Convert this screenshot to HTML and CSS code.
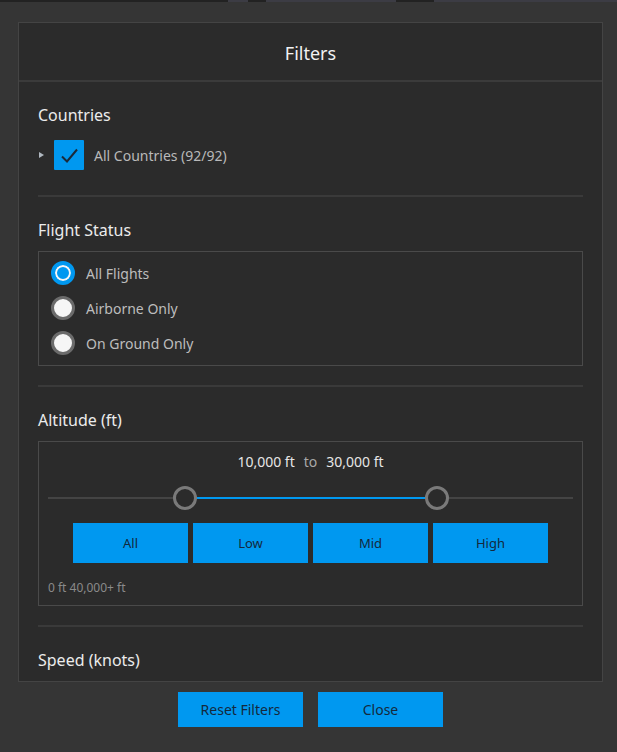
FILE: index.html
```html
<!DOCTYPE html>
<html>
<head>
<meta charset="utf-8">
<link rel="stylesheet" href="styles.css">
</head>
<body>
<div class="topstrip"><span class="seg s1"></span><span class="seg s2"></span><span class="seg s3"></span></div>
<div class="dialog">
  <div class="dialog-header"><span class="title">Filters</span></div>
  <div class="dialog-body">
    <section class="section">
      <h3 class="section-title">Countries</h3>
      <div class="check-row">
        <span class="caret"></span>
        <span class="checkbox">
          <svg width="30" height="30" viewBox="0 0 30 30"><path d="M8 16.5 L13 21.5 L23 9.5" fill="none" stroke="#1b2a3a" stroke-width="2"/></svg>
        </span>
        <span class="check-label">All Countries (92/92)</span>
      </div>
    </section>
    <div class="sep sep-wide"></div>
    <section class="section">
      <h3 class="section-title">Flight Status</h3>
      <div class="box radios">
        <label class="radio-row"><span class="radio on"></span><span class="radio-label">All Flights</span></label>
        <label class="radio-row"><span class="radio"></span><span class="radio-label">Airborne Only</span></label>
        <label class="radio-row"><span class="radio"></span><span class="radio-label">On Ground Only</span></label>
      </div>
    </section>
    <div class="sep"></div>
    <section class="section">
      <h3 class="section-title">Altitude (ft)</h3>
      <div class="box alt">
        <div class="range-text"><span>10,000 ft</span><span class="to">to</span><span>30,000 ft</span></div>
        <div class="slider">
          <div class="track"></div>
          <div class="fill" style="left:26.1%;width:48%"></div>
          <div class="thumb" style="left:26.1%"></div>
          <div class="thumb" style="left:74.1%"></div>
        </div>
        <div class="presets">
          <button class="btn preset">All</button>
          <button class="btn preset">Low</button>
          <button class="btn preset">Mid</button>
          <button class="btn preset">High</button>
        </div>
        <div class="scale">0 ft 40,000+ ft</div>
      </div>
    </section>
    <div class="sep"></div>
    <section class="section">
      <h3 class="section-title">Speed (knots)</h3>
    </section>
  </div>
</div>
<div class="footer">
  <button class="btn foot">Reset Filters</button>
  <button class="btn foot">Close</button>
</div>
</body>
</html>
```
FILE: styles.css
```css
html, body { margin: 0; padding: 0; }
body {
  background: #353535;
  font-family: "Noto Sans", "Open Sans", sans-serif;
  width: 617px;
  height: 752px;
  overflow: hidden;
  color: #e6e6e6;
}
.topstrip {
  height: 2px;
  background: #3c3c44;
  display: flex;
}
.seg { height: 2px; background: #222; display: block; }
.s1 { width: 228px; }
.s2 { width: 18px; margin-left: 20px; }
.s3 { width: 38px; margin-left: 130px; }
.dialog {
  margin: 20px 0 0 18px;
  width: 583px;
  border: 1px solid #444;
  background: #2b2b2b;
}
.dialog-header {
  height: 57px;
  border-bottom: 2px solid #3b3b3b;
  display: flex;
  align-items: center;
  justify-content: center;
  font-size: 18px;
  color: #f2f2f2;
}
.dialog-header .title { padding-top: 2px; }
.dialog-body {
  height: 599px;
  overflow: hidden;
  padding: 0 19px 0 19px;
}
.section-title {
  margin: 0;
  font-size: 16px;
  font-weight: normal;
  color: #ececec;
  line-height: 22px;
}
.section { padding-top: 22px; }
.check-row {
  display: flex;
  align-items: center;
  margin-top: 14px;
  height: 30px;
}
.caret {
  width: 0; height: 0;
  border-left: 5px solid #b0b8c0;
  border-top: 3px solid transparent;
  border-bottom: 3px solid transparent;
  margin-left: 1px;
  margin-right: 10px;
}
.checkbox {
  width: 30px; height: 30px;
  background: #0098f0;
  border-radius: 1px;
  display: block;
}
.checkbox svg { display: block; }
.check-label {
  margin-left: 10px;
  font-size: 14px;
  color: #b9b9b9;
}
.sep {
  height: 2px;
  background: #3a3a3a;
  margin-top: 19px;
}
.sep.sep-wide { margin-top: 25px; }
.box {
  border: 1px solid #4a4a4a;
  margin-top: 10px;
}
.radios {
  padding: 9px 0 10px 12px;
  display: flex;
  flex-direction: column;
  gap: 11px;
}
.radio-row { display: flex; align-items: center; height: 24px; }
.radio {
  width: 18px; height: 18px;
  border-radius: 50%;
  border: 3px solid #6b6b6b;
  background: #f6f6f6;
  display: block;
}
.radio.on {
  border-color: #0098f0;
  background: #0098f0;
  box-shadow: inset 0 0 0 2px #f6f6f6;
  width: 16px; height: 16px;
  border-width: 4px;
}
.radio-label {
  margin-left: 11px;
  font-size: 14px;
  color: #bdbdbd;
}
.alt { padding: 10px 9px 9px 9px; }
.range-text {
  text-align: center;
  font-size: 14px;
  color: #e6e6e6;
  display: flex;
  justify-content: center;
  gap: 9px;
}
.range-text .to { color: #a8a8a8; }
.slider {
  position: relative;
  height: 24px;
  margin-top: 15px;
}
.track {
  position: absolute;
  left: 0; right: 0; top: 11px;
  height: 2px;
  background: #444;
}
.fill {
  position: absolute;
  top: 11px;
  height: 2px;
  background: #0098f0;
}
.thumb {
  position: absolute;
  top: 0;
  width: 18px; height: 18px;
  margin-left: -12px;
  border-radius: 50%;
  border: 3px solid #7a7a7a;
  background: #2b2b2b;
}
.presets {
  display: flex;
  justify-content: center;
  gap: 5px;
  margin-top: 13px;
}
.btn {
  background: #0098f0;
  border: none;
  color: #14293d;
  font-family: inherit;
  padding: 0;
}
.preset {
  width: 115px;
  height: 40px;
  font-size: 13px;
}
.scale {
  margin-top: 16px;
  font-size: 12px;
  color: #8a8a8a;
}
.footer {
  display: flex;
  justify-content: center;
  gap: 15px;
  margin-top: 10px;
  padding-left: 4px;
}
.foot {
  width: 125px;
  height: 35px;
  font-size: 14px;
}
```
